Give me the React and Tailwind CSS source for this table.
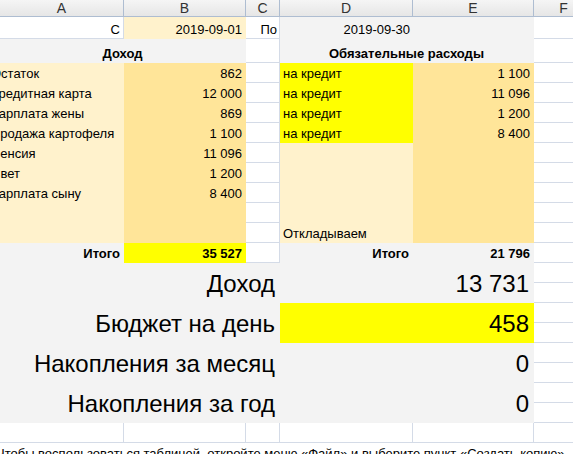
import React from 'react';

// ячейка таблицы: выравнивание по нижнему краю, как в Google Таблицах
function Cell({ className = '', children }) {
  return (
    <div className={`flex items-end overflow-hidden whitespace-nowrap border-r border-b leading-4 ${className}`}>
      {children}
    </div>
  );
}

const grid = 'bg-white border-[#d4dbe7]';
const cream = 'bg-[#fff2cc] border-transparent';
const sand = 'bg-[#ffe599] border-transparent';
const yellow = 'bg-[#ffff00] border-transparent';
const gray = 'bg-[#f3f3f3] border-transparent';

const income = [
  ['Остаток', '862'],
  ['Кредитная карта', '12 000'],
  ['Зарплата жены', '869'],
  ['Продажа картофеля', '1 100'],
  ['Пенсия', '11 096'],
  ['Свет', '1 200'],
  ['Зарплата сыну', '8 400'],
  ['', ''],
  ['', ''],
];

const credits = ['1 100', '11 096', '1 200', '8 400'];

const summary = [
  ['Доход', '13 731', gray],
  ['Бюджет на день', '458', yellow],
  ['Накопления за месяц', '0', gray],
  ['Накопления за год', '0', gray],
];

export default function App() {
  return (
    <div className="h-[454px] w-[573px] overflow-hidden bg-white text-[13px] text-black font-['Liberation_Sans',Arial,sans-serif]">
      <div className="grid grid-cols-[124px_122px_34px_133px_121px_60px] grid-rows-[17px_22px_24px_repeat(20,20px)]">
        {/* заголовки столбцов */}
        {['A', 'B', 'C', 'D', 'E', 'F'].map(l => (
          <div
            key={l}
            className="flex items-center justify-center border-r border-b border-[#aebdd1] bg-gradient-to-b from-[#f5f5f5] to-[#e6e6e6] text-[14px] leading-none text-[#333]"
          >
            {l}
          </div>
        ))}

        {/* период */}
        <Cell className={`${grid} justify-end pr-[3px]`}>С</Cell>
        <Cell className={`${cream} justify-end pr-[3px]`}>2019-09-01</Cell>
        <Cell className={`${grid} justify-end pr-[2px]`}>По</Cell>
        <Cell className={`${gray} justify-end pr-[2px]`}>2019-09-30</Cell>
        <Cell className={gray} />
        <Cell className={grid} />

        {/* заголовки блоков */}
        <Cell className={`${gray} col-span-2 justify-center font-bold`}>Доход</Cell>
        <Cell className={grid} />
        <Cell className={`${gray} col-span-2 justify-center font-bold`}>Обязательные расходы</Cell>
        <Cell className={grid} />

        {income.map(([name, sum], i) => (
          <React.Fragment key={i}>
            <Cell className={cream}>
              <span className="-ml-[9px]">{name}</span>
            </Cell>
            <Cell className={`${sand} justify-end pr-[3px]`}>{sum}</Cell>
            <Cell className={grid} />
            {i < 4 && (
              <>
                <Cell className={`${yellow} pl-[3px]`}>на кредит</Cell>
                <Cell className={`${sand} justify-end pr-[3px]`}>{credits[i]}</Cell>
              </>
            )}
            {i === 4 && (
              <>
                <Cell className={`${cream} row-span-5 pl-[3px]`}>Откладываем</Cell>
                <Cell className={`${sand} row-span-5`} />
              </>
            )}
            <Cell className={grid} />
          </React.Fragment>
        ))}

        {/* итоги */}
        <Cell className={`${gray} justify-end pr-[3px] font-bold`}>Итого</Cell>
        <Cell className={`${yellow} justify-end pr-[3px] font-bold`}>35 527</Cell>
        <Cell className={grid} />
        <Cell className={`${gray} justify-end pr-[3px] font-bold`}>Итого</Cell>
        <Cell className={`${gray} justify-end pr-[3px] font-bold`}>21 796</Cell>
        <Cell className={grid} />

        {/* крупные показатели */}
        {summary.map(([label, value, bg]) => (
          <React.Fragment key={label}>
            <Cell className={`${gray} col-span-3 row-span-2 justify-end pr-[4px] pb-[4px] text-[24px] leading-[28px]`}>{label}</Cell>
            <Cell className={`${bg} col-span-2 row-span-2 justify-end pr-[4px] pb-[4px] text-[24px] leading-[28px]`}>{value}</Cell>
            <Cell className={grid} />
            <Cell className={grid} />
          </React.Fragment>
        ))}

        {['a', 'b', 'c', 'd', 'e', 'f'].map(k => (
          <Cell key={k} className={grid} />
        ))}

        <Cell className={`${grid} col-span-6 overflow-visible`}>
          <span className="-ml-[4px]">
            Чтобы воспользоваться таблицей, откройте меню «Файл» и выберите пункт «Создать копию».
          </span>
        </Cell>
      </div>
    </div>
  );
}
